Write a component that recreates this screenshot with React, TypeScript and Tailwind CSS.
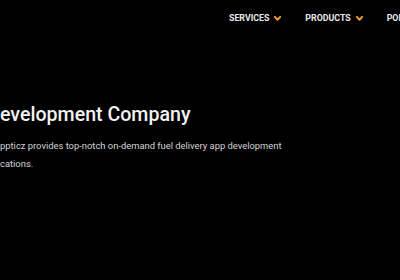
import React from 'react';

const Chevron: React.FC = () => (
  <svg width="7" height="5" viewBox="0 0 10 7" className="ml-[5px] mt-[1px]">
    <path d="M1.2 1.2 L5 5.4 L8.8 1.2" fill="none" stroke="#f0a030" strokeWidth="2.8" strokeLinecap="round" strokeLinejoin="round" />
  </svg>
);

const NavItem: React.FC<{ label: string; menu?: boolean }> = ({ label, menu }) => (
  <div className="flex items-center shrink-0">
    <span className="text-[8.8px] font-bold text-[#e8e8e8] leading-none">{label}</span>
    {menu && <Chevron />}
  </div>
);

export default function App() {
  return (
    <div
      className="w-[400px] h-[280px] bg-black overflow-hidden"
      style={{ fontFamily: 'Roboto, "Noto Sans", sans-serif' }}
    >
      <nav className="flex items-center pl-[229px] pt-[14px] gap-[24px] whitespace-nowrap">
        <NavItem label="SERVICES" menu />
        <NavItem label="PRODUCTS" menu />
        <NavItem label="PORTFOLIO" />
      </nav>
      <section className="pt-[80px]">
        <h1 className="text-[19.6px] font-medium text-[#f2f2f2] leading-[24px] whitespace-nowrap">
          evelopment Company
        </h1>
        <p className="mt-[10px] text-[9.4px] text-[#d4d4d4] leading-[18px] whitespace-nowrap">
          ppticz provides top-notch on-demand fuel delivery app development
          <br />
          cations.
        </p>
      </section>
    </div>
  );
}
